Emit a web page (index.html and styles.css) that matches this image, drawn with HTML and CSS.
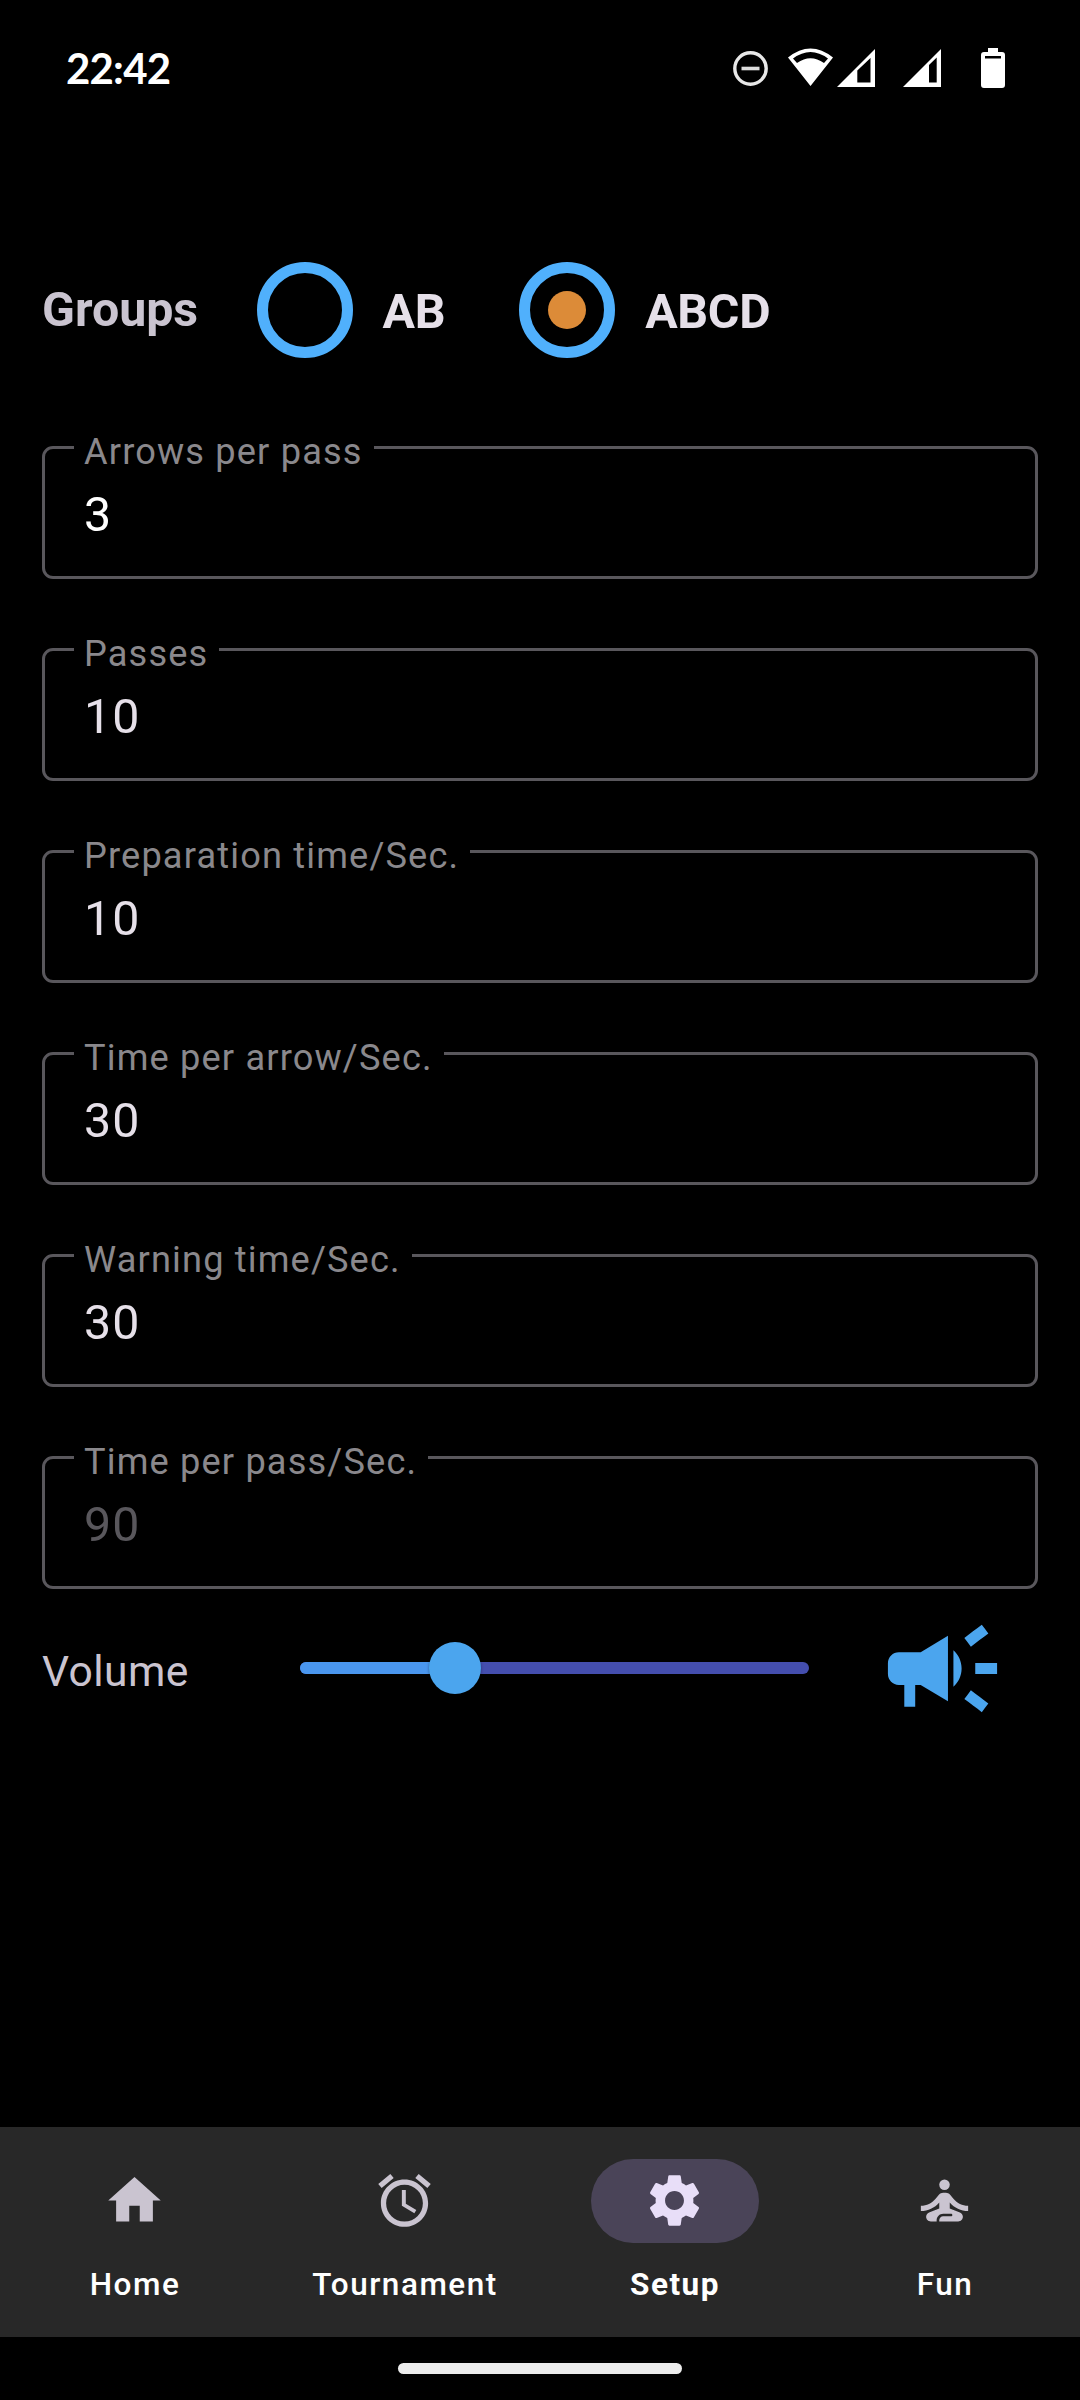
FILE: index.html
```html
<!DOCTYPE html>
<html lang="en">
<head>
<meta charset="utf-8">
<title>Setup</title>
<link rel="stylesheet" href="styles.css">
</head>
<body>
<div class="screen">
  <header class="status">
    <span class="clock">22:42</span>
    <svg class="status-icons" viewBox="0 0 216 44" aria-hidden="true">
      <g fill="none" stroke="#fff">
        <circle cx="20.5" cy="22.5" r="15.7" stroke-width="3.4" stroke="#e8e8e8"/>
        <path d="M11.5 22.5h18" stroke-width="3.6" stroke="#ddd"/>
      </g>
      <g fill="#fff">
        <path fill-rule="evenodd" d="M58 11.5Q80.500-6.500 103 11.500L80.500 40ZM63 12.500L67 17Q80.500 7.500 94 17L98 12.500Q80.500-.500 63 12.500Z"/>
        <path fill-rule="evenodd" d="M107 41L145 3V41ZM127.300 24.500V36.500H140.500V12Z"/>
        <path fill-rule="evenodd" d="M173 41L211 3V41ZM199 19V36.500H206.700V11.500Z"/>
      </g>
    </svg>
    <svg class="battery" viewBox="0 0 24 40" aria-hidden="true">
      <path fill="#fff" fill-rule="evenodd" d="M7 0H17V4H21Q24 4 24 7V37Q24 40 21 40H3Q0 40 0 37V7Q0 4 3 4H7ZM4 8V10.600H20V8Z"/>
    </svg>
  </header>

  <main class="content">
    <div class="groups">
      <span class="groups-title">Groups</span>
      <span class="radio"></span>
      <span class="radio-label">AB</span>
      <span class="radio radio-second"><span class="radio-dot"></span></span>
      <span class="radio-label">ABCD</span>
    </div>

    <div class="fields">
      <div class="field"><span class="label">Arrows per pass</span><span class="value value-active">3</span></div>
      <div class="field"><span class="label">Passes</span><span class="value">10</span></div>
      <div class="field"><span class="label">Preparation time/Sec.</span><span class="value">10</span></div>
      <div class="field"><span class="label">Time per arrow/Sec.</span><span class="value">30</span></div>
      <div class="field"><span class="label">Warning time/Sec.</span><span class="value">30</span></div>
      <div class="field"><span class="label">Time per pass/Sec.</span><span class="value value-disabled">90</span></div>
    </div>

    <div class="volume">
      <span class="volume-title">Volume</span>
      <div class="slider"><span class="slider-fill"></span><span class="thumb"></span></div>
      <svg class="horn" viewBox="0 0 24 24" aria-hidden="true"><path fill="#4ba5ee" d="M18 11v2h4v-2h-4zm-2 6.610c.96.71 2.210 1.650 3.200 2.390.4-.53.8-1.070 1.200-1.600-.99-.74-2.240-1.680-3.200-2.400-.4.540-.8 1.080-1.200 1.610zM20.400 5.600c-.4-.53-.8-1.070-1.200-1.600-.99.740-2.240 1.680-3.200 2.400.4.530.8 1.070 1.200 1.600.96-.72 2.210-1.650 3.200-2.400zM4 9c-1.100 0-2 .9-2 2v2c0 1.100.9 2 2 2h1v4h2v-4h1l5 3V6L8 9H4zm11.500 3c0-1.330-.58-2.530-1.500-3.350v6.690c.92-.81 1.500-2.010 1.500-3.340z"/></svg>
    </div>
  </main>

  <nav class="tabs">
    <div class="tab">
      <span class="pill"><svg class="tab-icon" viewBox="0 0 24 24"><path d="M10 20v-6h4v6h5v-8h3L12 3 2 12h3v8z"/></svg></span>
      <span class="tab-label">Home</span>
    </div>
    <div class="tab">
      <span class="pill"><svg class="tab-icon" viewBox="0 0 24 24"><path d="M22 5.720l-4.600-3.860-1.290 1.530 4.600 3.860L22 5.720zM7.880 3.390L6.600 1.860 2 5.710l1.290 1.530 4.590-3.850zM12.500 8H11v6l4.750 2.850.75-1.230-4-2.370V8zM12 4c-4.970 0-9 4.030-9 9s4.020 9 9 9c4.970 0 9-4.030 9-9s-4.030-9-9-9zm0 16c-3.870 0-7-3.130-7-7s3.130-7 7-7 7 3.130 7 7-3.130 7-7 7z"/></svg></span>
      <span class="tab-label">Tournament</span>
    </div>
    <div class="tab tab-active">
      <span class="pill"><svg class="tab-icon" viewBox="0 0 24 24"><path d="M19.140 12.940c.04-.3.060-.61.060-.94 0-.32-.02-.64-.07-.94l2.030-1.580c.18-.14.230-.41.120-.61l-1.920-3.320c-.12-.22-.37-.29-.59-.22l-2.390.96c-.5-.38-1.030-.7-1.620-.94l-.36-2.540c-.04-.24-.24-.41-.48-.41h-3.840c-.24 0-.43.17-.47.41l-.36 2.540c-.59.24-1.130.57-1.620.94l-2.390-.96c-.22-.08-.47 0-.59.220L2.740 8.870c-.12.21-.08.470.120.610l2.030 1.580c-.05.300-.09.630-.09.940s.02.640.07.940l-2.030 1.580c-.18.140-.23.410-.12.610l1.920 3.320c.12.220.37.290.59.220l2.390-.96c.5.380 1.030.700 1.620.940l.36 2.540c.05.240.240.410.480.410h3.840c.24 0 .44-.17.470-.41l.36-2.540c.59-.24 1.130-.56 1.620-.94l2.390.96c.22.080.47 0 .59-.22l1.920-3.320c.12-.22.070-.47-.12-.61l-2.010-1.580zM12 15.600c-1.980 0-3.600-1.620-3.600-3.600s1.620-3.600 3.600-3.600 3.600 1.620 3.600 3.600-1.620 3.600-3.600 3.600z"/></svg></span>
      <span class="tab-label">Setup</span>
    </div>
    <div class="tab">
      <span class="pill"><svg class="tab-icon" viewBox="0 0 24 24"><circle cx="12" cy="6" r="2"/><path d="M21 16v-2c-2.240 0-4.160-.96-5.600-2.680l-1.340-1.600C13.680 9.260 13.120 9 12.530 9h-1.050c-.6 0-1.150.26-1.530.72l-1.340 1.600C7.160 13.040 5.240 14 3 14v2c2.770 0 5.190-1.170 7-3.250V15l-3.880 1.550C5.450 16.820 5 17.480 5 18.210 5 19.200 5.800 20 6.790 20H9v-.5c0-1.380 1.120-2.500 2.500-2.500h3c.28 0 .5.220.5.500s-.22.500-.5.500h-3c-.83 0-1.500.67-1.500 1.500v.5h7.210C18.200 20 19 19.200 19 18.210c0-.73-.45-1.390-1.120-1.660L14 15v-2.250c1.810 2.080 4.230 3.250 7 3.250z"/></svg></span>
      <span class="tab-label">Fun</span>
    </div>
  </nav>
  <footer class="gesture"><span class="handle"></span></footer>
</div>
</body>
</html>
```
FILE: styles.css
```css
* { box-sizing: border-box; }

body {
  margin: 0;
  background: #000;
  color: #e6e0e9;
  font-family: Roboto, "Liberation Sans", sans-serif;
}

.screen {
  display: flex;
  flex-direction: column;
  width: 1080px;
  height: 2400px;
  overflow: hidden;
  background: #000;
}

.status {
  display: flex;
  align-items: flex-start;
  height: 136px;
  padding: 46px 75px 0 66px;
}

.clock {
  flex: 1;
  color: #fff;
  font-family: Lato, sans-serif;
  font-size: 42px;
  font-weight: 700;
  line-height: 44px;
  letter-spacing: -.8px;
}

.status-icons { width: 216px; height: 44px; }
.battery { width: 24px; height: 40px; margin: 2px 0 0 35px; }

.content {
  flex: 1;
  padding: 125px 42px 0;
}

.groups {
  display: flex;
  align-items: center;
  height: 97px;
  font-size: 48.3px;
  font-weight: 700;
  line-height: 56px;
}

.groups-title { width: 214.5px; color: #cac4d0; }

.radio {
  display: grid;
  place-items: center;
  flex: none;
  width: 96px;
  height: 96px;
  border: 11px solid #50b0fc;
  border-radius: 50%;
}

.radio-second { margin-left: 74px; }

.radio-dot {
  width: 38px;
  height: 38px;
  border-radius: 50%;
  background: #dc8b38;
}

.radio-label {
  padding: 4px 0 0 30px;
  letter-spacing: -.3px;
}

.fields {
  display: grid;
  gap: 69px;
  margin-top: 88px;
}

.field {
  position: relative;
  height: 133px;
  padding: 38px 39px 0;
  border: 3px solid #59575c;
  border-radius: 11px;
}

.label {
  position: absolute;
  top: -18px;
  left: 29px;
  padding: 0 11px 0 10px;
  background: #000;
  color: #8a888c;
  font-size: 36.2px;
  line-height: 42px;
  letter-spacing: 1.15px;
  white-space: nowrap;
}

.value {
  display: block;
  font-size: 48.3px;
  line-height: 56px;
  letter-spacing: 1.1px;
}

.value-active { color: #fff; }
.value-disabled { color: #59575c; }

.volume {
  display: flex;
  align-items: center;
  height: 132px;
  margin-top: 13px;
}

.volume-title {
  width: 258px;
  padding-top: 5px;
  color: #cac4d0;
  font-size: 42.6px;
  line-height: 50px;
  letter-spacing: .4px;
}

.slider {
  position: relative;
  width: 509px;
  height: 12px;
  border-radius: 6px;
  background: #444eae;
}

.slider-fill {
  display: block;
  width: 155px;
  height: 12px;
  border-radius: 6px 0 0 6px;
  background: #4a96ee;
}

.thumb {
  position: absolute;
  top: -20px;
  left: 129px;
  width: 52px;
  height: 52px;
  border-radius: 50%;
  background: #4ba5ee;
  box-shadow: 0 1px 3px rgba(0, 0, 0, .4);
}

.horn { width: 131px; height: 131px; margin-left: 68px; }

.tabs {
  display: grid;
  grid-template-columns: repeat(4, 1fr);
  height: 210px;
  background: #282828;
}

.tab {
  display: flex;
  flex-direction: column;
  align-items: center;
  padding-top: 32px;
}

.pill {
  display: flex;
  padding: 10px 0 0 52px;
  width: 168px;
  height: 84px;
  border-radius: 42px;
}

.tab-icon { width: 63px; height: 63px; fill: #cac4d0; }

.tab-label {
  margin-top: 22px;
  color: #fff;
  font-size: 31.5px;
  font-weight: 500;
  line-height: 40px;
  letter-spacing: 1.5px;
}

.tab-active .pill { background: #4a4458; }
.tab-active .tab-icon { fill: #e8def8; }
.tab-active .tab-label { font-weight: 700; }

.gesture {
  display: flex;
  justify-content: center;
  height: 63px;
  padding-top: 26px;
}

.handle {
  width: 284px;
  height: 11px;
  border-radius: 5.5px;
  background: #ececec;
}
```
